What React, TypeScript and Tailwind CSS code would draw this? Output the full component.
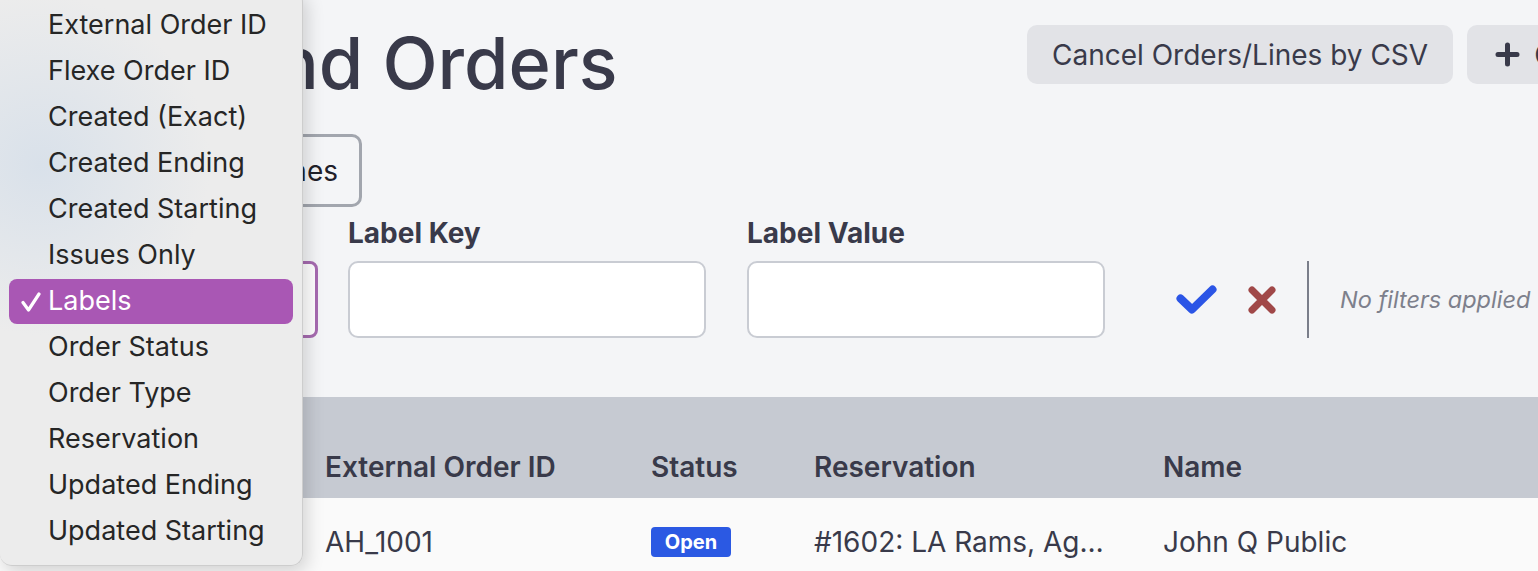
import { useState } from 'react';

const filterOptions = [
  'External Order ID',
  'Flexe Order ID',
  'Created (Exact)',
  'Created Ending',
  'Created Starting',
  'Issues Only',
  'Labels',
  'Order Status',
  'Order Type',
  'Reservation',
  'Updated Ending',
  'Updated Starting',
];

function FilterMenu({ selected }: { selected: string }) {
  return (
    <div className="absolute left-0 top-[-10px] z-20 w-[303px] h-[576px] rounded-[12px] border-r border-b border-[#cdcdcd] bg-[radial-gradient(ellipse_170px_170px_at_40px_175px,#d9e1ea,#ececec)] pt-[13px] shadow-[4px_6px_18px_rgba(0,0,0,0.16)] font-['Inter',sans-serif] text-[27px] text-[#262626]">
      {filterOptions.map((opt) => {
        const active = opt === selected;
        return (
          <div key={opt} className="h-[46px] px-[9px]">
            <div
              className={
                active
                  ? 'flex h-[45px] items-center rounded-[8px] bg-[#a957b4] pl-[11px] text-white'
                  : 'flex h-[45px] items-center pl-[11px]'
              }
            >
              <span className="flex w-[28px] items-center">
                {active && (
                  <svg width="21" height="22" viewBox="0 0 21 22" fill="none">
                    <path d="M3 11.5 8.5 19 19 3" stroke="white" strokeWidth="3.2" strokeLinecap="round" strokeLinejoin="round" />
                  </svg>
                )}
              </span>
              <span>{opt}</span>
            </div>
          </div>
        );
      })}
    </div>
  );
}

export default function App() {
  const [filter] = useState('Labels');

  return (
    <div className="relative h-[571px] w-[1538px] overflow-hidden bg-[#f4f5f7] font-['Inter',sans-serif] text-[#393a4a]">
      <FilterMenu selected={filter} />

      <div className="pl-[16px]">
        {/* page header */}
        <div className="flex items-start pt-[25px]">
          <h1 className="mt-[2px] w-[1011px] shrink-0 pl-[5px] text-[72px] font-medium leading-none text-[#393a4a]">
            Outbound Orders
          </h1>
          <div className="flex shrink-0 gap-[14px]">
            <button className="h-[59px] rounded-[10px] bg-[#e2e3e7] px-[25px] text-[28px] text-[#393a4a]">
              Cancel Orders/Lines by CSV
            </button>
            <button className="flex h-[59px] items-center gap-[14px] rounded-[10px] bg-[#e2e3e7] pl-[28px] pr-[24px] text-[28px] text-[#393a4a]">
              <svg width="25" height="25" viewBox="0 0 25 25" fill="none">
                <path d="M12.5 3v19M3 12.5h19" stroke="#393a4a" strokeWidth="5" strokeLinecap="round" />
              </svg>
              Create Order
            </button>
          </div>
        </div>

        {/* orders / lines toggle */}
        <div className="mt-[35px] flex">
          <button className="h-[73px] w-[170px] rounded-[10px] bg-[#393a4a] text-[28px] text-white">Orders</button>
          <button className="flex h-[73px] w-[176px] items-center justify-end rounded-[10px] border-[3px] border-[#a2a6ae] pr-[21px] text-[28px] text-[#1f2029]">
            Lines
          </button>
        </div>

        {/* filter row */}
        <div className="mt-[8px] flex items-end">
          <div className="flex flex-col">
            <span className="text-[28px] font-bold leading-[36px]">Filter By</span>
            <div className="mt-[10px] flex h-[77px] w-[302px] items-center justify-between rounded-[8px] border-[3px] border-[#a66bb0] bg-white pl-[28px] pr-[12px] text-[27px]">
              Labels
              <svg width="12" height="8" viewBox="0 0 12 8">
                <path d="M1 1l5 5 5-5" stroke="#6b6e78" strokeWidth="2" fill="none" />
              </svg>
            </div>
          </div>

          <div className="ml-[30px] flex w-[358px] flex-col">
            <span className="text-[28px] font-bold leading-[36px]">Label Key</span>
            <input className="mt-[10px] h-[77px] rounded-[10px] border-2 border-[#c9ccd3] bg-white px-[16px] text-[27px] outline-none" />
          </div>

          <div className="ml-[41px] flex w-[358px] flex-col">
            <span className="text-[28px] font-bold leading-[36px]">Label Value</span>
            <input className="mt-[10px] h-[77px] rounded-[10px] border-2 border-[#c9ccd3] bg-white px-[16px] text-[27px] outline-none" />
          </div>

          <div className="ml-[67px] flex h-[77px] items-center">
            <svg width="48" height="36" viewBox="0 0 48 36" fill="none">
              <path d="M8.5 16.5 20 27.5 40.5 7.5" stroke="#2b55e6" strokeWidth="8" strokeLinecap="round" strokeLinejoin="round" />
            </svg>
            <svg className="ml-[26px]" width="32" height="32" viewBox="0 0 32 32" fill="none">
              <path d="M6 6l20 20M26 6 6 26" stroke="#a04848" strokeWidth="7" strokeLinecap="round" />
            </svg>
            <div className="ml-[29px] h-[77px] w-[2px] bg-[#7a7e8a]" />
            <span className="ml-[31px] whitespace-nowrap text-[23.5px] italic text-[#7d808c]">No filters applied</span>
          </div>
        </div>
      </div>

      {/* orders table */}
      <div className="mt-[59px]">
        <div className="grid h-[101px] grid-cols-[325px_326px_163px_349px_1fr] items-end bg-[#c6cad2] pb-[10px] text-[28px] font-semibold leading-[42px]">
          <div className="pl-[40px]">Flexe ID</div>
          <div>External Order ID</div>
          <div>Status</div>
          <div>Reservation</div>
          <div>Name</div>
        </div>
        <div className="grid h-[90px] grid-cols-[325px_326px_163px_349px_1fr] items-start bg-[#fafafa] pt-[23px] text-[28px] leading-[42px]">
          <div className="pl-[40px]">1001</div>
          <div>AH_1001</div>
          <div className="flex h-[42px] items-center">
            <span className="flex h-[30px] w-[80px] items-center justify-center rounded-[4px] bg-[#2b59e3] text-[20px] font-bold text-white">
              Open
            </span>
          </div>
          <div className="w-[292px] truncate">#1602: LA Rams, Agoura Hills</div>
          <div>John Q Public</div>
        </div>
      </div>
    </div>
  );
}
